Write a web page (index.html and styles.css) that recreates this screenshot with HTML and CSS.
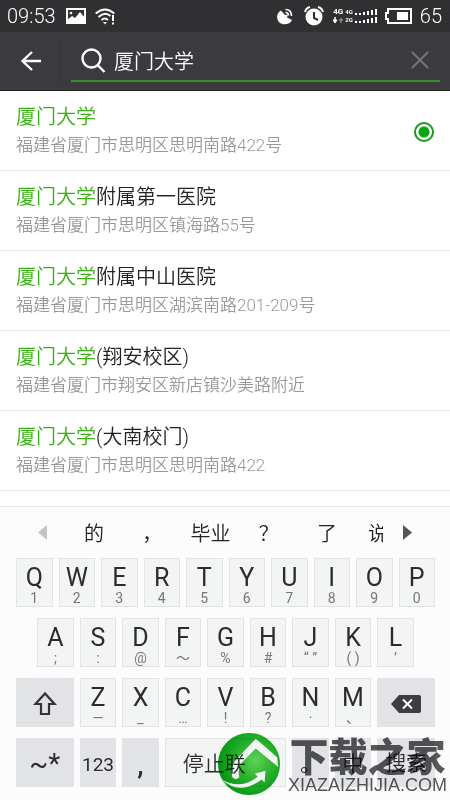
FILE: index.html
```html
<!DOCTYPE html>
<html lang="zh-CN">
<head>
<meta charset="utf-8">
<meta name="viewport" content="width=device-width, initial-scale=1">
<title>厦门大学</title>
<link rel="stylesheet" href="styles.css">
</head>
<body>
<div class="status">
  <span class="clock">09:53</span>
  <svg class="picture" width="20" height="16" viewBox="0 0 20 16"><rect x="1" y="1" width="18" height="14" fill="none" stroke="#fff" stroke-width="2"/><path d="M1 15v-3l5-4 3 2 5-6 5 6v5z" fill="#fff"/><circle cx="5" cy="5" r="1.3" fill="#fff"/></svg>
  <svg class="wifi" width="20" height="17" viewBox="0 0 20 17" fill="none" stroke="#fff" stroke-width="2"><path d="M.7 5.5Q10-2.500 19.300 5.500M3.500 9Q10 3 15.500 8M6.500 12Q10 9 13 12"/><path d="M8 14h4l-2 2.500z" fill="#fff" stroke="none"/><path d="M18 7v6M18 14.500v2"/></svg>
  <span class="spacer"></span>
  <svg class="dish" width="16" height="17" viewBox="0 0 16 17"><path d="M4 2.500C-1 5-1 12 3 15c4 2.500 10 1.500 12-3l-5-2.500 1-3-3 .5z" fill="#fff"/><path d="M8.500 1.500q6 0 6 6.500M8.500 4.500q3 0 3 3" fill="none" stroke="#fff" stroke-width="1.600"/></svg>
  <svg class="alarm" width="20" height="20" viewBox="0 0 20 20"><circle cx="10" cy="11" r="8.500" fill="#fff"/><path d="M1 6Q2 2 6 1M14 1q4 1 5 5" stroke="#fff" stroke-width="2" fill="none"/><path d="M10 6v6l4 2" stroke="#303033" stroke-width="2" fill="none"/></svg>
  <div class="network">
    <div><span>4G</span><small>4G</small><svg width="22" height="6" viewBox="0 0 22 6"><path d="M0 5h2M4 5h2" stroke="#fff" stroke-width="2"/><path d="M9 3v3M13 2v4M17 1v5M21 0v6" stroke="#fff" stroke-width="2"/></svg></div>
    <div><svg width="10" height="7" viewBox="0 0 10 7"><path d="M2 0v3h2L2 6 0 3h2z" fill="#fff" stroke="#fff"/><path d="M8 6V1M6 3h4" stroke="#aaa"/></svg><small>2G</small><svg width="22" height="6" viewBox="0 0 22 6"><path d="M0 5h2M4 5h2" stroke="#fff" stroke-width="2"/><path d="M9 3v3M13 2v4M17 1v5M21 0v6" stroke="#fff" stroke-width="2"/></svg></div>
  </div>
  <svg class="battery" width="27" height="16" viewBox="0 0 27 16"><path d="M3 1h23v14H3v-4H1V5h2z" fill="none" stroke="#fff" stroke-width="2"/><path d="M12 4h11v8H12z" fill="#fff"/></svg>
  <span class="percent">65</span>
</div>
<header class="bar">
  <button class="back" aria-label="返回"><svg width="22" height="22" viewBox="0 0 22 22" fill="none" stroke="#fff" stroke-width="2.400"><path d="M21 11H2M12 2l-9.500 9L12 20"/></svg></button>
  <form class="search">
    <svg width="25" height="25" viewBox="0 0 25 25" fill="none" stroke="#fff" stroke-width="2.400"><circle cx="10.500" cy="10.500" r="9"/><path d="M16.500 17l7 7"/></svg>
    <input type="text" value="厦门大学" aria-label="搜索地点">
    <button type="button" class="clear" aria-label="清除"><svg width="18" height="18" viewBox="0 0 18 18" stroke="#77777a" stroke-width="1.800"><path d="M1 1l16 16M17 1L1 17"/></svg></button>
  </form>
</header>
<main class="results">
  <label class="place"><span class="info"><span class="name"><em>厦门大学</em></span><span class="address">福建省厦门市思明区思明南路422号</span></span><input type="radio" name="place" checked></label>
  <label class="place"><span class="info"><span class="name"><em>厦门大学</em>附属第一医院</span><span class="address">福建省厦门市思明区镇海路55号</span></span><input type="radio" name="place"></label>
  <label class="place"><span class="info"><span class="name"><em>厦门大学</em>附属中山医院</span><span class="address">福建省厦门市思明区湖滨南路201-209号</span></span><input type="radio" name="place"></label>
  <label class="place"><span class="info"><span class="name"><em>厦门大学</em>(翔安校区)</span><span class="address">福建省厦门市翔安区新店镇沙美路附近</span></span><input type="radio" name="place"></label>
  <label class="place"><span class="info"><span class="name"><em>厦门大学</em>(大南校门)</span><span class="address">福建省厦门市思明区思明南路422</span></span><input type="radio" name="place"></label>
</main>
<section class="keyboard">
  <div class="candidates">
    <button aria-label="上一页"><svg width="9" height="15" viewBox="0 0 9 15"><path d="M9 0v15L0 7.500z" fill="#c4c4c4"/></svg></button>
    <div class="words"><button>的</button><button>，</button><button>毕业</button><button>？</button><button>了</button><button class="cut">说</button></div>
    <button aria-label="下一页"><svg width="9" height="15" viewBox="0 0 9 15"><path d="M0 0v15l9-7.500z" fill="#555"/></svg></button>
  </div>
  <div class="keys">
    <button>Q<small>1</small></button><button>W<small>2</small></button><button>E<small>3</small></button><button>R<small>4</small></button><button>T<small>5</small></button><button>Y<small>6</small></button><button>U<small>7</small></button><button>I<small>8</small></button><button>O<small>9</small></button><button>P<small>0</small></button>
  </div>
  <div class="keys">
    <button class="indent">A<small>;</small></button><button>S<small>:</small></button><button>D<small>@</small></button><button>F<small>～</small></button><button>G<small>%</small></button><button>H<small>#</small></button><button>J<small>“ ”</small></button><button>K<small>( )</small></button><button>L<small>’</small></button>
  </div>
  <div class="keys">
    <button class="side" aria-label="大写"><svg width="24" height="25" viewBox="0 0 24 25" fill="none" stroke="#333" stroke-width="2.200"><path d="M12 2.500L2.500 13H8v10h8V13h5.500z"/></svg></button><button>Z<small>—</small></button><button>X<small>_</small></button><button>C<small>…</small></button><button>V<small>!</small></button><button>B<small>?</small></button><button>N<small>·</small></button><button>M<small>、</small></button><button class="side" aria-label="删除"><svg width="30" height="18" viewBox="0 0 30 18"><path d="M8 0h20q2 0 2 2v14q0 2-2 2H8L0 9z" fill="#3d3d40"/><path d="M12 4.500l9 9M21 4.500l-9 9" stroke="#fff" stroke-width="2"/></svg></button>
  </div>
  <div class="keys functions">
    <button class="side symbols">~*</button><button class="dark digits">123</button><button class="dark comma">,</button><button class="space">停止联</button><button class="dark">。</button><button class="dark">中</button><button class="side">搜索</button>
  </div>
</section>
<div class="mark">
  <svg width="64" height="66" viewBox="0 0 64 68">
    <defs><radialGradient id="ball" cx=".6" cy=".45" r=".6"><stop offset="0" stop-color="#62dc58"/><stop offset=".6" stop-color="#21b428"/><stop offset="1" stop-color="#059b16"/></radialGradient></defs>
    <circle cx="32" cy="34" r="32" fill="url(#ball)"/>
    <path d="M15 48Q12 38 19 29L39 8l22 19 1 10L39 18 25 32q-5 6-3 16-4 3-7 0z" fill="#fff"/>
    <path d="M4 50q19 11 37-3l-3-3 11-3-1 12-3-3Q22 67 4 50z" fill="#fff"/>
  </svg>
  <div class="brand"><strong>下载之家</strong><span>XIAZAIZHIJIA.COM</span></div>
</div>
</body>
</html>
```
FILE: styles.css
```css
* { box-sizing: border-box; }
body {
  margin: 0;
  min-height: 100vh;
  display: flex;
  flex-direction: column;
  position: relative;
  overflow-x: hidden;
  background: #fff;
  font-family: Roboto, "Noto Sans CJK SC", sans-serif;
  font-weight: 350;
  color: #222;
}
button { border: 0; padding: 0; background: none; font: inherit; color: inherit; }
svg { display: block; flex: none; }

.status {
  display: flex;
  align-items: center;
  height: 32px;
  padding: 0 8px 0 7px;
  background: #303033;
  color: #fff;
  font-size: 20px;
}
.picture { margin-left: 10px; }
.wifi { margin-left: 9px; }
.spacer { flex: 1; }
.alarm { margin-left: 11px; }
.network { margin-left: 9px; font-size: 8px; line-height: 8px; font-weight: 700; }
.network div { display: flex; align-items: center; gap: 2px; }
.network small { font-size: 6px; }
.battery { margin-left: 8px; }
.percent { margin-left: 8px; }

.bar {
  display: flex;
  height: 59px;
  padding-right: 10px;
  background: #3b3b3f;
  border-bottom: 1px solid #222;
}
.back { width: 61px; padding-left: 20px; border-right: 1px solid #333336; margin: 8px 10px 8px 0; }
.search {
  flex: 1;
  display: flex;
  align-items: center;
  margin-bottom: 8px;
  padding: 8px 11px 0 10px;
  border-bottom: 2px solid #35902a;
}
.search input {
  flex: 1;
  min-width: 0;
  margin-left: 8px;
  padding: 0;
  border: 0;
  outline: 0;
  background: none;
  color: #fff;
  font: inherit;
  font-size: 20px;
}

.place {
  display: flex;
  align-items: center;
  height: 80px;
  padding: 2px 16px 0;
  border-bottom: 1px solid #e8e8e8;
}
.info { flex: 1; }
.name { display: block; font-size: 20px; line-height: 28px; }
.name em { font-style: normal; color: #3bb014; }
.address { display: block; font-size: 17px; line-height: 29px; color: #999; }
.place input {
  appearance: none;
  width: 20px;
  height: 20px;
  margin: 0;
  border-radius: 50%;
}
.place input:checked {
  border: 2px solid #149a18;
  background: radial-gradient(circle, #0aa60f 5px, #fff 6px);
}

.keyboard {
  flex: 1;
  margin-top: 15px;
  padding: 0 12px 11px 13px;
  border-top: 1px solid #e8e8e8;
  background: #fcfcfc;
}
.candidates {
  display: flex;
  align-items: center;
  height: 51px;
  padding: 0 26px 0 25px;
  font-size: 20px;
}
.words { flex: 1; display: flex; overflow: hidden; margin: 0 20px 0 18px; }
.words button { flex: 1 1 58px; }
.words .cut { flex: 0 0 27px; padding-left: 12px; overflow: hidden; }
.keys { display: grid; grid-template-columns: repeat(20, 1fr); margin-bottom: 11px; }
.keys:last-child { margin-bottom: 0; }
.keys button {
  grid-column: span 2;
  display: flex;
  flex-direction: column;
  align-items: center;
  justify-content: center;
  height: 49px;
  margin: 0 3px;
  padding-top: 4px;
  border: 1px solid #e2e4e4;
  background: #f3f4f4;
  font-size: 25px;
  line-height: 27px;
  font-weight: 400;
  color: #2c2c2e;
}
.keys small { font-size: 14px; line-height: 14px; color: #777; }
.keys .indent { grid-column: 2 / span 2; }
.keys .side { grid-column: span 3; padding-top: 2px; background: #e2e3e7; }
.keys .dark { background: #e2e3e7; }
.functions button { font-size: 21px; font-weight: 350; }
.functions .symbols { font-size: 28px; font-weight: 400; }
.functions .digits { font-size: 19px; font-weight: 400; }
.functions .comma { font-size: 28px; font-weight: 500; }
.functions .space { grid-column: span 6; align-items: flex-start; padding-left: 17px; }

.mark {
  position: absolute;
  right: 3px;
  bottom: 3px;
  display: flex;
  align-items: center;
  gap: 7px;
  mix-blend-mode: multiply;
}
.brand { padding-top: 6px; color: #58585a; text-align: center; }
.brand strong { display: block; font-size: 39px; line-height: 36px; font-weight: 900; }
.brand span { display: block; font: 400 18px/18px "Liberation Sans", sans-serif; }
```
